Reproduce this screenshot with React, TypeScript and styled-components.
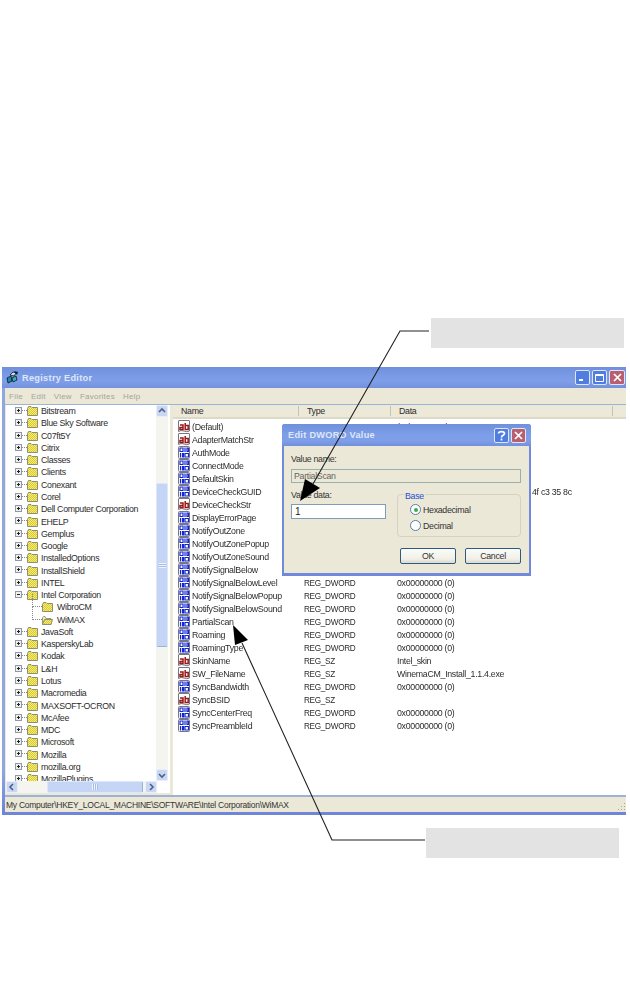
import React from "react";
import styled, { createGlobalStyle } from "styled-components";

const Global = createGlobalStyle`
  html, body { margin: 0; padding: 0; background: #fff; }
  body { font-family: "Liberation Sans", Arial, sans-serif; }
`;

const Page = styled.div`
  position: relative;
  width: 630px;
  height: 990px;
  padding-top: 318px;
  box-sizing: border-box;
  overflow: hidden;
`;

const Callout = styled.div<{ $left: number }>`
  width: 193px;
  height: 30px;
  margin-left: ${(p) => p.$left}px;
  background: #e3e3e3;
`;

const Win = styled.div`
  position: relative;
  width: 624px;
  height: 448px;
  margin: 19px 0 13px 2px;
  box-sizing: border-box;
  padding: 0 0 3px 3px;
  background: linear-gradient(#8ea6e2 90%, #6f86d8 99%);
  display: flex;
  flex-direction: column;
  border-radius: 3px 3px 0 0;
  filter: blur(0.4px);
`;

const TitleBar = styled.div`
  flex: 0 0 21px;
  margin-left: -3px;
  padding: 0 1px 0 4px;
  display: flex;
  align-items: center;
  background: linear-gradient(#7090dc, #7a9be6 45%, #7f9ee8 70%, #7290dd);
`;

const TitleText = styled.span`
  flex: 1;
  font-size: 9.2px;
  font-weight: 700;
  color: #dfe7f8;
  letter-spacing: 0.3px;
`;

const AppTitle = styled(TitleText)`
  margin-left: 3px;
`;

const CtrlBtn = styled.div<{ $tone: "blue" | "red"; $w?: number }>`
  width: ${(p) => p.$w ?? 15}px;
  height: 15px;
  margin-left: 2px;
  box-sizing: border-box;
  border: 1px solid #dfe6f7;
  border-radius: 2px;
  background: ${(p) => (p.$tone === "red" ? "#b8606f" : "#4f7de0")};
  display: flex;
  align-items: center;
  justify-content: center;
`;

const MenuBar = styled.div`
  flex: 0 0 16px;
  display: flex;
  align-items: center;
  gap: 8px;
  padding-left: 4px;
  background: #ebe8d8;
  font-size: 8px;
  color: #a5a499;
  letter-spacing: 0.25px;
`;

const Body = styled.div`
  flex: 1;
  min-height: 0;
  display: flex;
  background: #ebe8d8;
  border-top: 1px solid #9db3d6;
`;

const TreePane = styled.div`
  width: 164px;
  margin: 0 0 2px 1px;
  display: flex;
  flex-direction: column;
  background: #fff;
  overflow: hidden;
`;

const TreeTop = styled.div`
  flex: 1;
  min-height: 0;
  display: flex;
`;

const TreeList = styled.div`
  flex: 1;
  overflow: hidden;
  position: relative;
`;

const TreeRow = styled.div<{ $child?: boolean }>`
  position: relative;
  height: 12.27px;
  display: flex;
  align-items: center;
  padding-left: ${(p) => (p.$child ? 36 : 21)}px;
  font-size: 8.8px;
  letter-spacing: -0.3px;
  color: #2c2c2c;
  white-space: nowrap;
`;

const Expander = styled.span`
  position: absolute;
  left: 9px;
  top: 2px;
  width: 7px;
  height: 7px;
  box-sizing: border-box;
  border: 1px solid #9298a8;
  background: #eef0ec;
  &::before {
    content: "";
    position: absolute;
    left: 1px;
    top: 2px;
    width: 3px;
    height: 1px;
    background: #222;
  }
`;

const ExpanderPlus = styled(Expander)`
  &::after {
    content: "";
    position: absolute;
    left: 2px;
    top: 1px;
    width: 1px;
    height: 3px;
    background: #222;
  }
`;

const Dots = styled.span`
  position: absolute;
  left: 16px;
  top: 5px;
  width: 5px;
  border-top: 1px dotted #888;
`;

const ChildLine = styled.span`
  position: absolute;
  left: 26px;
  top: -7px;
  width: 9px;
  height: 12px;
  border-left: 1px dotted #888;
  border-bottom: 1px dotted #888;
`;

const Label = styled.span<{ $gap?: number }>`
  margin-left: ${(p) => p.$gap ?? 3}px;
`;

const VScroll = styled.div`
  flex: 0 0 11px;
  margin-right: 2px;
  display: flex;
  flex-direction: column;
  background: #f4f5ef;
`;

const ScrollBtn = styled.div<{ $size?: number }>`
  flex: 0 0 ${(p) => p.$size ?? 12}px;
  box-sizing: border-box;
  background: #c9d7f4;
  border: 1px solid #e8eefb;
  border-radius: 2px;
  display: flex;
  align-items: center;
  justify-content: center;
  color: #4d6185;
`;

const VThumb = styled.div`
  height: 164px;
  margin-top: 66px;
  box-sizing: border-box;
  background: #c5d5f5;
  border: 1px solid #dde7fb;
  border-bottom-color: #9db0d9;
  border-radius: 2px;
  display: flex;
  align-items: center;
  justify-content: center;
`;

const Track = styled.div`
  flex: 1;
`;

const Grip = styled.div<{ $vertical?: boolean }>`
  width: ${(p) => (p.$vertical ? 7 : 6)}px;
  height: ${(p) => (p.$vertical ? 5 : 6)}px;
  background: repeating-linear-gradient(
    ${(p) => (p.$vertical ? "0deg" : "90deg")},
    #eef3fd 0 1px,
    #a9bde6 1px 2px
  );
`;

const ResizeGrip = styled.div`
  width: 8px;
  height: 8px;
  margin-top: 3px;
  background: radial-gradient(circle, #a8a698 0 0.8px, transparent 1px) 0 0 / 3px 3px;
  clip-path: polygon(100% 0, 100% 100%, 0 100%);
`;

const HScroll = styled.div`
  flex: 0 0 12px;
  display: flex;
  margin-right: 13px;
  background: #f4f5ef;
`;

const HThumb = styled.div`
  width: 96px;
  margin-left: 29px;
  box-sizing: border-box;
  background: #c5d5f5;
  border: 1px solid #dde7fb;
  border-right-color: #9db0d9;
  border-radius: 2px;
  display: flex;
  align-items: center;
  justify-content: center;
`;

const ListPane = styled.div`
  flex: 1;
  min-width: 0;
  margin-left: 3px;
  background: #fff;
  display: flex;
  flex-direction: column;
  font-size: 8.8px;
  letter-spacing: -0.3px;
  color: #2c2c2c;
  overflow: hidden;
`;

const ListHead = styled.div`
  flex: 0 0 13px;
  box-sizing: border-box;
  display: grid;
  grid-template-columns: 126px 92px 222px 1fr;
  background: #ece9d9;
  border-bottom: 2px solid #dcd9c8;
  margin-bottom: 1px;
`;

const HeadCell = styled.div`
  padding-left: 8px;
  display: flex;
  align-items: center;
  box-shadow: inset -1px 0 0 #c6c3b3;
  margin: 1px 0;
`;

const ListRow = styled.div`
  flex: 0 0 13.02px;
  display: grid;
  grid-template-columns: 131px 93px 1fr;
  align-items: center;
  white-space: nowrap;
`;

const NameCell = styled.div`
  display: flex;
  align-items: center;
  gap: 2px;
  padding-left: 5px;
`;

const TypeCell = styled.div`
  font-size: 8.2px;
  letter-spacing: -0.3px;
  padding-top: 1px;
`;

const ValueCell = styled.div<{ $indent?: number }>`
  padding-left: ${(p) => p.$indent ?? 0}px;
`;

const StatusBar = styled.div`
  flex: 0 0 17px;
  box-sizing: border-box;
  display: flex;
  justify-content: space-between;
  align-items: center;
  background: #ebe8d8;
  border-top: 2px solid #9db3d6;
  padding: 0 1px 0 1px;
  font-size: 8.5px;
  letter-spacing: -0.26px;
  color: #333;
`;

const Dialog = styled.div`
  position: absolute;
  left: 280px;
  top: 57px;
  width: 249px;
  height: 152px;
  box-sizing: border-box;
  padding: 0 2px 3px;
  background: #7089da;
  border-radius: 3px 3px 0 0;
  display: flex;
  flex-direction: column;
`;

const DialogTitle = styled.div`
  flex: 0 0 22px;
  margin: 0 -2px;
  padding: 0 5px 0 6px;
  display: flex;
  align-items: center;
  background: linear-gradient(#7090dc, #7d9ee8 50%, #7f9ee8 75%, #7290dd);
  border-radius: 3px 3px 0 0;
`;

const DialogBody = styled.div`
  flex: 1;
  background: #ebe8d8;
  padding: 8px 8px 0 7px;
  display: flex;
  flex-direction: column;
  font-size: 8.8px;
  letter-spacing: -0.3px;
  color: #333;
`;

const FieldLabel = styled.div`
  height: 11px;
  line-height: 11px;
`;

const ReadOnly = styled.div`
  height: 14px;
  margin-top: 4px;
  box-sizing: border-box;
  border: 1px solid #9ab0ad;
  background: #ebe8d8;
  padding-left: 2px;
  line-height: 12px;
  color: #666660;
`;

const MidRow = styled.div`
  display: flex;
  margin-top: 7px;
  gap: 11px;
`;

const DataCol = styled.div`
  width: 95px;
`;

const DataInput = styled.div`
  height: 15px;
  margin-top: 3px;
  box-sizing: border-box;
  border: 1px solid #7f9db9;
  background: #fff;
  padding-left: 3px;
  line-height: 13px;
  font-size: 10px;
  color: #222;
`;

const BaseGroup = styled.fieldset`
  margin: 4px 0 0;
  width: 124px;
  height: 43px;
  box-sizing: border-box;
  position: relative;
  border: 1px solid #d5d2c2;
  border-radius: 4px;
  display: flex;
  flex-direction: column;
  justify-content: flex-end;
  gap: 5px;
  padding: 0 0 5px 12px;
`;

const BaseTag = styled.span`
  position: absolute;
  left: 6px;
  top: -4px;
  background: #ebe8d8;
  padding: 0 1px;
  color: #1f50d0;
  line-height: 10px;
`;

const RadioRow = styled.div`
  display: flex;
  align-items: center;
  gap: 2px;
  height: 11px;
`;

const Radio = styled.span<{ $on?: boolean }>`
  width: 11px;
  height: 11px;
  box-sizing: border-box;
  border: 1px solid #5a7ea6;
  border-radius: 50%;
  background: #fff;
  display: flex;
  align-items: center;
  justify-content: center;
  &::after {
    content: "";
    width: 4px;
    height: 4px;
    border-radius: 50%;
    background: ${(p) => (p.$on ? "#35b04a" : "transparent")};
  }
`;

const BtnRow = styled.div`
  display: flex;
  justify-content: flex-end;
  gap: 9px;
  margin-top: 11px;
`;

const DlgButton = styled.div`
  width: 56px;
  height: 16px;
  box-sizing: border-box;
  border: 1px solid #2d5a7e;
  border-radius: 2px;
  background: linear-gradient(#fbfbf8, #f1f0e8 70%, #dcd9cc);
  text-align: center;
  line-height: 14px;
  color: #333;
`;

const Overlay = styled.svg`
  position: absolute;
  left: 0;
  top: 0;
  pointer-events: none;
`;

const treeItems = [
  "Bitstream","Blue Sky Software","C07ft5Y","Citrix","Classes","Clients","Conexant","Corel",
  "Dell Computer Corporation","EHELP","Gemplus","Google","InstalledOptions","InstallShield","INTEL",
];
const treeAfter = [
  "JavaSoft","KasperskyLab","Kodak","L&H","Lotus","Macromedia","MAXSOFT-OCRON","McAfee","MDC",
  "Microsoft","Mozilla","mozilla.org","MozillaPlugins",
];

type Row = { name: string; kind: "ab" | "bin"; type?: string; value?: string; indent?: number };
const D = "REG_DWORD";
const Z = "0x00000000 (0)";
const rows: Row[] = [
  { name: "(Default)", kind: "ab", value: "(value not set)" },
  { name: "AdapterMatchStr", kind: "ab" },
  { name: "AuthMode", kind: "bin" },
  { name: "ConnectMode", kind: "bin" },
  { name: "DefaultSkin", kind: "bin" },
  { name: "DeviceCheckGUID", kind: "bin", value: "4f c3 35 8c", indent: 135 },
  { name: "DeviceCheckStr", kind: "ab" },
  { name: "DisplayErrorPage", kind: "bin" },
  { name: "NotifyOutZone", kind: "bin" },
  { name: "NotifyOutZonePopup", kind: "bin" },
  { name: "NotifyOutZoneSound", kind: "bin" },
  { name: "NotifySignalBelow", kind: "bin" },
  { name: "NotifySignalBelowLevel", kind: "bin", type: D, value: Z },
  { name: "NotifySignalBelowPopup", kind: "bin", type: D, value: Z },
  { name: "NotifySignalBelowSound", kind: "bin", type: D, value: Z },
  { name: "PartialScan", kind: "bin", type: D, value: Z },
  { name: "Roaming", kind: "bin", type: D, value: Z },
  { name: "RoamingType", kind: "bin", type: D, value: Z },
  { name: "SkinName", kind: "ab", type: "REG_SZ", value: "Intel_skin" },
  { name: "SW_FileName", kind: "ab", type: "REG_SZ", value: "WinemaCM_Install_1.1.4.exe" },
  { name: "SyncBandwidth", kind: "bin", type: D, value: Z },
  { name: "SyncBSID", kind: "ab", type: "REG_SZ" },
  { name: "SyncCenterFreq", kind: "bin", type: D, value: Z },
  { name: "SyncPreambleId", kind: "bin", type: D, value: Z },
];

const Folder = ({ open }: { open?: boolean }) => (
  <svg width="11" height="10" viewBox="0 0 11 10" style={{ flex: "none" }}>
    <defs>
      <pattern id="dither" width="2" height="2" patternUnits="userSpaceOnUse">
        <rect width="2" height="2" fill="#f6ee70" />
        <rect width="1" height="1" fill="#d6c838" />
        <rect x="1" y="1" width="1" height="1" fill="#d6c838" />
      </pattern>
    </defs>
    {open ? (
      <>
        <path d="M0.5 2.5V9.5H9V3.5H4L3 1.5H1.5Z" fill="#eee9c0" stroke="#9a9a80" />
        <path d="M0.5 9.5L2.5 4.5H10.5L9 9.5Z" fill="url(#dither)" stroke="#8e8e70" />
      </>
    ) : (
      <path d="M0.5 2.5V9.5H10.5V1.5H5L4 0.5H1.5Z" fill="url(#dither)" stroke="#8e8e70" />
    )}
  </svg>
);

const AbIcon = () => (
  <svg width="12" height="13" viewBox="0 0 12 13" style={{ flex: "none" }}>
    <path d="M.5 1Q.5.5 1 .5H11Q11.5.5 11.5 1V11Q9 12.5 6 11Q3 9.8.5 11.5Z" fill="#fff" stroke="#77777f" />
    <path d="M2 5h3v4.5H2V7.5h3M7.2 3v6.5h3V5.5h-3" fill="none" stroke="#9c1818" strokeWidth="1.5" />
  </svg>
);

const BinIcon = () => (
  <svg width="12" height="13" viewBox="0 0 12 13" style={{ flex: "none" }}>
    <rect x="0.5" y="0.5" width="11" height="12" rx="1" fill="#fff" stroke="#77777f" />
    <path d="M2 2h3v3.5H2zM7 1.5v4.5M9 2h1.5v3.5H9zM2.5 7v4.5M4.5 7.5h1V11h-1zM7 7.5h3.5V11H7z" fill="none" stroke="#1326d8" strokeWidth="1.2" />
  </svg>
);

const AppIcon = () => (
  <svg width="13" height="15" viewBox="0 0 13 15" style={{ flex: "none" }}>
    <path d="M1 8l4-2 1 5-4 2z" fill="#1f8aa0" stroke="#112" strokeWidth="0.8" />
    <path d="M6 8l4-2 1 4-4 2z" fill="#37b0bc" stroke="#112" strokeWidth="0.8" />
    <path d="M4 5l3-3 3 1-2 3z" fill="#c4e6ea" stroke="#112" strokeWidth="0.8" />
    <path d="M8 1l4 1-1 3z" fill="#141c2c" />
  </svg>
);

const Chevron = ({ dir }: { dir: "up" | "down" | "left" | "right" }) => {
  const d = { up: "M2 6L5 3L8 6", down: "M2 4L5 7L8 4", left: "M6 2L3 5L6 8", right: "M4 2L7 5L4 8" }[dir];
  return (
    <svg width="10" height="10" viewBox="0 0 10 10">
      <path d={d} fill="none" stroke="#4d6185" strokeWidth="1.6" />
    </svg>
  );
};

const CloseGlyph = () => (
  <svg width="9" height="9" viewBox="0 0 9 9">
    <path d="M1 1L8 8M8 1L1 8" stroke="#fff" strokeWidth="1.7" />
  </svg>
);

const renderTree = (name: string) => (
  <TreeRow key={name}>
    <ExpanderPlus />
    <Dots />
    <Folder />
    <Label>{name}</Label>
  </TreeRow>
);

export default function App() {
  return (
    <Page>
      <Global />
      <Callout $left={431} />
      <Win>
        <TitleBar>
          <AppIcon />
          <AppTitle>Registry Editor</AppTitle>
          <CtrlBtn $tone="blue">
            <svg width="9" height="9" viewBox="0 0 9 9"><rect x="1" y="6" width="4" height="2" fill="#fff" /></svg>
          </CtrlBtn>
          <CtrlBtn $tone="blue">
            <svg width="9" height="9" viewBox="0 0 9 9"><path d="M.5 1.5h8v7h-8zM.5 2.5h8" fill="none" stroke="#fff" /></svg>
          </CtrlBtn>
          <CtrlBtn $tone="red" $w={16}><CloseGlyph /></CtrlBtn>
        </TitleBar>
        <MenuBar>
          <span>File</span><span>Edit</span><span>View</span><span>Favorites</span><span>Help</span>
        </MenuBar>
        <Body>
          <TreePane>
            <TreeTop>
              <TreeList>
                {treeItems.map(renderTree)}
                <TreeRow>
                  <Expander />
                  <Dots />
                  <Folder />
                  <Label>Intel Corporation</Label>
                </TreeRow>
                <TreeRow $child>
                  <ChildLine />
                  <Folder />
                  <Label $gap={4}>WibroCM</Label>
                </TreeRow>
                <TreeRow $child>
                  <ChildLine />
                  <Folder open />
                  <Label $gap={4}>WiMAX</Label>
                </TreeRow>
                {treeAfter.map(renderTree)}
              </TreeList>
              <VScroll>
                <ScrollBtn><Chevron dir="up" /></ScrollBtn>
                <VThumb><Grip $vertical /></VThumb>
                <Track />
                <ScrollBtn><Chevron dir="down" /></ScrollBtn>
              </VScroll>
            </TreeTop>
            <HScroll>
              <ScrollBtn $size={11}><Chevron dir="left" /></ScrollBtn>
              <HThumb><Grip /></HThumb>
              <Track />
              <ScrollBtn $size={12}><Chevron dir="right" /></ScrollBtn>
            </HScroll>
          </TreePane>
          <ListPane>
            <ListHead>
              <HeadCell>Name</HeadCell>
              <HeadCell>Type</HeadCell>
              <HeadCell>Data</HeadCell>
            </ListHead>
            {rows.map((r) => (
              <ListRow key={r.name}>
                <NameCell>
                  {r.kind === "ab" ? <AbIcon /> : <BinIcon />}
                  {r.name}
                </NameCell>
                <TypeCell>{r.type}</TypeCell>
                <ValueCell $indent={r.indent}>{r.value}</ValueCell>
              </ListRow>
            ))}
          </ListPane>
        </Body>
        <StatusBar>
          <span>My Computer\HKEY_LOCAL_MACHINE\SOFTWARE\Intel Corporation\WiMAX</span>
          <ResizeGrip />
        </StatusBar>
        <Dialog>
          <DialogTitle>
            <TitleText>Edit DWORD Value</TitleText>
            <CtrlBtn $tone="blue">
              <svg width="9" height="11" viewBox="0 0 9 11">
                <path d="M1.5 3.5C1.5 1 7.5 1 7.5 3.5C7.5 5.5 4.5 5.2 4.5 7.5M4.5 8.5V10.5" fill="none" stroke="#fff" strokeWidth="1.7" />
              </svg>
            </CtrlBtn>
            <CtrlBtn $tone="red"><CloseGlyph /></CtrlBtn>
          </DialogTitle>
          <DialogBody>
            <FieldLabel>Value name:</FieldLabel>
            <ReadOnly>PartialScan</ReadOnly>
            <MidRow>
              <DataCol>
                <FieldLabel>Value data:</FieldLabel>
                <DataInput>1</DataInput>
              </DataCol>
              <BaseGroup>
                <BaseTag>Base</BaseTag>
                <RadioRow><Radio $on />Hexadecimal</RadioRow>
                <RadioRow><Radio />Decimal</RadioRow>
              </BaseGroup>
            </MidRow>
            <BtnRow>
              <DlgButton>OK</DlgButton>
              <DlgButton>Cancel</DlgButton>
            </BtnRow>
          </DialogBody>
        </Dialog>
      </Win>
      <Callout $left={426} />
      <Overlay width="630" height="990" viewBox="0 0 630 990">
        <path d="M429 331H400L313 484" fill="none" stroke="#222" strokeWidth="1.1" />
        <path d="M300 501L305 479L320 488Z" fill="#000" />
        <path d="M425 840H332L242 643" fill="none" stroke="#222" strokeWidth="1.1" />
        <path d="M233 625L235 645L248 640Z" fill="#000" />
      </Overlay>
    </Page>
  );
}
